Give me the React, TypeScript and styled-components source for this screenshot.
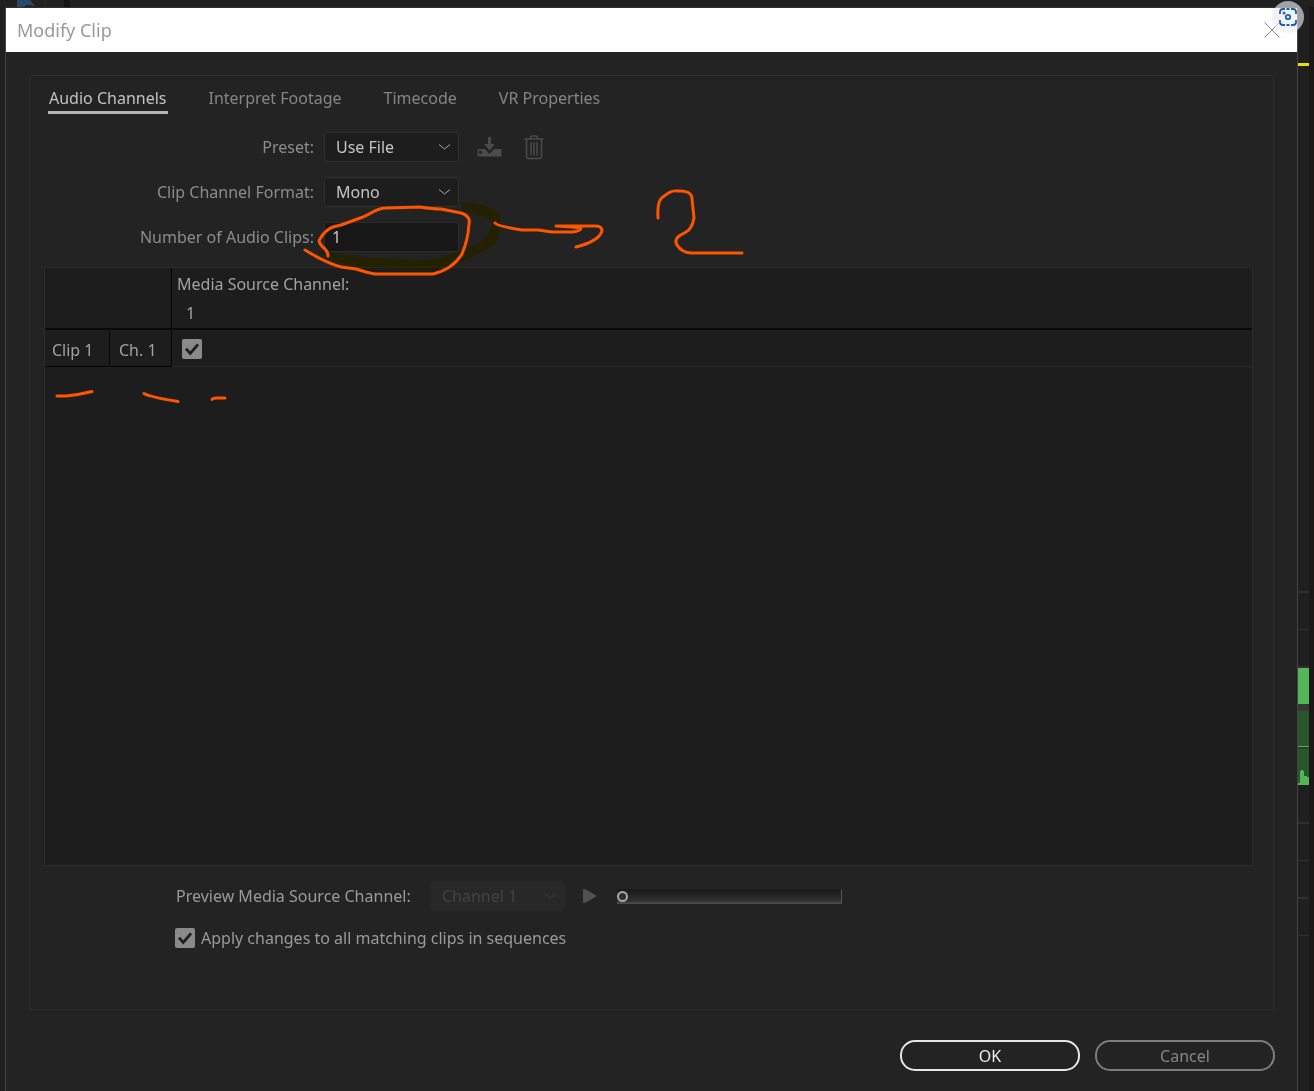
import React, { useState } from "react";
import styled, { createGlobalStyle } from "styled-components";

const GlobalStyle = createGlobalStyle`
  *, *::before, *::after { box-sizing: border-box; }
  body {
    margin: 0;
    background: #1f1f1f;
    font-family: "Noto Sans", "Open Sans", sans-serif;
    font-size: 16px;
    line-height: 24px;
    color: #9a9a9a;
  }
  button, input, select { font: inherit; }
`;

const Desktop = styled.div`
  position: relative;
  min-height: 100vh;
  display: grid;
  grid-template-columns: 5px minmax(0, 1fr) 11px 5px;
  grid-template-rows: 7px 1fr;
  background: #1f1f1f;
`;

const TopStrip = styled.div`
  grid-column: 1 / -1;
  display: flex;
  padding-left: 17px;
  background: #212121;
  overflow: hidden;
`;

const TopDivider = styled.span`
  width: 6px;
  margin-left: 18px;
  background: #151515;
`;

const Dialog = styled.section`
  grid-column: 2;
  display: flex;
  flex-direction: column;
  border: 1px solid #434343;
  border-top-color: #303030;
  border-bottom: 0;
  background: #232323;
`;

const TitleBar = styled.header`
  display: flex;
  align-items: center;
  justify-content: space-between;
  height: 44px;
  padding: 0 17px 0 11px;
  background: #ffffff;
  color: #999999;
`;

const Title = styled.h1`
  margin: 0;
  font-size: 18px;
  font-weight: 400;
`;

const IconButton = styled.button`
  display: grid;
  place-items: center;
  padding: 0;
  border: 0;
  background: none;
  color: #4b4b4b;
`;

const Panel = styled.div`
  flex: 1;
  display: flex;
  flex-direction: column;
  margin: 23px 23px 0;
  padding: 8px 20px 59px 14px;
  border: 1px solid #2e2e2e;
  border-radius: 3px;
`;

const Tabs = styled.nav`
  display: flex;
  gap: 40px;
  padding-left: 4px;
`;

const Tab = styled.button<{ $active?: boolean }>`
  padding: 0 1px;
  height: 30px;
  border: 0;
  border-bottom: 3px solid ${(p) => (p.$active ? "#b4b4b4" : "transparent")};
  background: none;
  color: ${(p) => (p.$active ? "#c2c2c2" : "#858585")};
`;

const Form = styled.div`
  display: grid;
  grid-template-columns: 270px 135px auto;
  grid-auto-rows: 30px;
  row-gap: 15px;
  column-gap: 10px;
  align-items: center;
  margin: 18px 0 15px;
`;

const FieldLabel = styled.label`
  grid-column: 1;
  text-align: right;
  color: #8c8c8c;
`;

const SelectBox = styled.div<{ $dim?: boolean }>`
  display: grid;
  grid-template-columns: 1fr 20px;
  align-items: center;
  width: 135px;
  height: 30px;
  border: 1px solid ${(p) => (p.$dim ? "#282828" : "#303030")};
  border-radius: 3px;
  background: ${(p) => (p.$dim ? "#282828" : "#1d1d1d")};
  color: ${(p) => (p.$dim ? "#424242" : "#c4c4c4")};

  svg { grid-area: 1 / 2; pointer-events: none; }
`;

const Select = styled.select`
  grid-area: 1 / 1 / 2 / 3;
  width: 100%;
  height: 28px;
  padding: 0 20px 0 11px;
  appearance: none;
  border: 0;
  background: none;
  color: inherit;
  opacity: 1;
`;

const NumberInput = styled.input`
  width: 135px;
  height: 30px;
  padding: 0 7px;
  border: 1px solid #2c2c2c;
  border-radius: 3px;
  background: #171717;
  color: #c4c4c4;
`;

const Tools = styled.div`
  display: flex;
  align-items: center;
  gap: 22px;
  padding-left: 8px;
`;

const ChannelArea = styled.div`
  flex: 1;
  min-height: 599px;
  border: 1px solid #2c2c2c;
  background: #1d1d1d;
`;

const ChannelTable = styled.table`
  width: 100%;
  border-collapse: separate;
  border-spacing: 0;
  table-layout: fixed;
`;

const HeadCell = styled.th`
  height: 62px;
  padding: 2px 5px 0;
  border-bottom: 2px solid #0a0a0a;
  font-weight: 400;
  text-align: left;
  vertical-align: top;
  line-height: 29px;
  color: #a2a2a2;

  &:first-child { border-right: 1px solid #060606; }
  span { display: block; padding-left: 9px; }
`;

const NameCell = styled.td`
  height: 37px;
  padding: 4px 7px 0;
  border-right: 1px solid #060606;
  border-bottom: 1px solid #060606;
  color: #a2a2a2;

  & + & { padding-left: 9px; }
`;

const CheckCell = styled.td`
  padding: 2px 10px 0;
  border-bottom: 1px solid #2a2a2a;
`;

const CheckFrame = styled.span`
  display: grid;
  width: 20px;
  height: 20px;

  svg { grid-area: 1 / 1; pointer-events: none; }
`;

const CheckInput = styled.input`
  grid-area: 1 / 1;
  width: 20px;
  height: 20px;
  margin: 0;
  appearance: none;
  border-radius: 2px;
  background: #8a8a8a;
  & + svg { visibility: hidden; }
  &:checked + svg { visibility: visible; }
`;

const PreviewRow = styled.div`
  display: flex;
  align-items: center;
  margin-top: 15px;
  padding-left: 132px;

  > label { width: 254px; }
`;

const PlayButton = styled(IconButton)`
  margin: 0 20px 0 18px;
`;

const Slider = styled.input`
  width: 225px;
  height: 15px;
  margin: 0;
  appearance: none;
  background: linear-gradient(#1b1b1b, #232323 40%, #343434);
  border: solid;
  border-width: 1px 1px 2px 0;
  border-color: #191919 #555555 #484848;

  &::-webkit-slider-thumb {
    appearance: none;
    width: 11px;
    height: 11px;
    margin-top: 2px;
    border: 2px solid #a8a8a8;
    border-radius: 50%;
    background: #303030;
  }
`;

const ApplyRow = styled.label`
  display: flex;
  align-items: center;
  gap: 6px;
  margin-top: 15px;
  padding-left: 131px;
`;

const Actions = styled.footer`
  display: flex;
  justify-content: flex-end;
  gap: 15px;
  padding: 30px 22px 20px;
`;

const ActionButton = styled.button<{ $primary?: boolean }>`
  width: 180px;
  height: 31px;
  padding: 0;
  border: 2px solid ${(p) => (p.$primary ? "#e6e6e6" : "#7c7c7c")};
  border-radius: 15px;
  background: none;
  color: ${(p) => (p.$primary ? "#ededed" : "#858585")};
`;

const Timeline = styled.aside`
  grid-column: 3;
  display: flex;
  flex-direction: column;
  background: #1f1f1f;
`;

const Lane = styled.div<{ $h: number; $fill?: string; $line?: string; $lineHeight?: number }>`
  flex: none;
  height: ${(p) => p.$h}px;
  background: ${(p) => p.$fill ?? "transparent"};
  border-bottom: ${(p) => p.$lineHeight ?? 0}px solid ${(p) => p.$line ?? "transparent"};
`;

const Edge = styled.div`
  grid-column: 4;
  background: #191817;
`;

const SnipBadge = styled.button`
  position: absolute;
  top: 1px;
  right: 10px;
  display: grid;
  place-items: center;
  width: 32px;
  height: 32px;
  padding: 0;
  border: 0;
  border-radius: 50%;
  background: rgba(236, 236, 236, 0.64);
`;

const Ink = styled.svg`
  position: absolute;
  top: 0;
  left: 0;
  pointer-events: none;
`;

const Highlighter = styled(Ink)`
  mix-blend-mode: multiply;
`;

const Chevron = () => (
  <svg width="14" height="8" viewBox="0 0 14 8" fill="none" stroke="currentColor" strokeWidth="1" opacity="0.8">
    <path d="M1 1.5 L6.5 6 L12 1.5" />
  </svg>
);

const CheckMark = () => (
  <svg width="20" height="20" viewBox="0 0 20 20" fill="none" stroke="#1e1e1e" strokeWidth="2.8">
    <path d="M4 9.8 L8.3 14.4 L16 5.4" />
  </svg>
);

const Check = ({ label, id }: { label?: string; id?: string }) => (
  <CheckFrame>
    <CheckInput type="checkbox" id={id} aria-label={label} defaultChecked />
    <CheckMark />
  </CheckFrame>
);

const TABS = ["Audio Channels", "Interpret Footage", "Timecode", "VR Properties"];

const lowerLanes = [
  { h: 39, line: 2 },
  { h: 37, line: 1 },
  { h: 38, line: 2 },
  { h: 37, line: 1 },
];

export default function App() {
  const [tab, setTab] = useState(TABS[0]);

  return (
    <>
      <GlobalStyle />
      <Desktop>
        <TopStrip>
          <svg width="18" height="7" viewBox="0 0 18 7">
            <path d="M0 0H13L18 6L10 5L7 7H0Z" fill="#2b4766" />
          </svg>
          <svg width="11" height="7" viewBox="0 0 11 7">
            <path d="M10.5 0V7" stroke="#2b2b2b" />
          </svg>
          <TopDivider />
        </TopStrip>

        <Dialog aria-label="Modify Clip">
          <TitleBar>
            <Title>Modify Clip</Title>
            <IconButton aria-label="Close">
              <svg width="16" height="16" viewBox="0 0 16 16" stroke="#8a8a8a" strokeWidth="1">
                <path d="M0.5 0.5 L15.5 15.5 M15.5 0.5 L0.5 15.5" />
              </svg>
            </IconButton>
          </TitleBar>

          <Panel>
            <Tabs>
              {TABS.map((name) => (
                <Tab key={name} $active={tab === name} onClick={() => setTab(name)}>
                  {name}
                </Tab>
              ))}
            </Tabs>

            <Form>
              <FieldLabel htmlFor="preset">Preset:</FieldLabel>
              <SelectBox>
                <Select id="preset">
                  <option>Use File</option>
                </Select>
                <Chevron />
              </SelectBox>
              <Tools>
                <IconButton aria-label="Save preset">
                  <svg width="25" height="20" viewBox="0 0 25 20" fill="currentColor">
                    <path d="M11 0H14V7H18L12.5 13.5L7 7H11Z" />
                    <path
                      fillRule="evenodd"
                      d="M0.5 12H8L12.5 17L17 12H24.5V19.5H0.5ZM2 13.8V16.8H5V13.8Z"
                    />
                  </svg>
                </IconButton>
                <IconButton aria-label="Delete preset">
                  <svg width="20" height="25" viewBox="0 0 20 25" fill="none" stroke="currentColor" strokeWidth="1.5">
                    <path d="M0.5 4H19.5M6.5 4V2.5Q6.5 1 8 1H12Q13.5 1 13.5 2.5V4M2.5 4V22Q2.5 23.5 4 23.5H16Q17.5 23.5 17.5 22V4M7 7V20.5M10 7V20.5M13 7V20.5" />
                  </svg>
                </IconButton>
              </Tools>

              <FieldLabel htmlFor="format">Clip Channel Format:</FieldLabel>
              <SelectBox>
                <Select id="format">
                  <option>Mono</option>
                </Select>
                <Chevron />
              </SelectBox>

              <FieldLabel htmlFor="clips">Number of Audio Clips:</FieldLabel>
              <NumberInput id="clips" type="text" inputMode="numeric" defaultValue="1" />
            </Form>

            <ChannelArea>
              <ChannelTable>
                <colgroup>
                  <col width="65" />
                  <col width="62" />
                  <col />
                </colgroup>
                <thead>
                  <tr>
                    <HeadCell colSpan={2} />
                    <HeadCell>
                      Media Source Channel:
                      <span>1</span>
                    </HeadCell>
                  </tr>
                </thead>
                <tbody>
                  <tr>
                    <NameCell>Clip 1</NameCell>
                    <NameCell>Ch. 1</NameCell>
                    <CheckCell>
                      <Check label="Clip 1, channel 1, source 1" />
                    </CheckCell>
                  </tr>
                </tbody>
              </ChannelTable>
            </ChannelArea>

            <PreviewRow>
              <label htmlFor="preview">Preview Media Source Channel:</label>
              <SelectBox $dim>
                <Select id="preview" disabled>
                  <option>Channel 1</option>
                </Select>
                <Chevron />
              </SelectBox>
              <PlayButton aria-label="Play">
                <svg width="14" height="14" viewBox="0 0 14 14">
                  <path d="M0 0H2L14 7L2 14H0Z" fill="#505050" />
                </svg>
              </PlayButton>
              <Slider type="range" min="0" max="100" defaultValue="0" aria-label="Preview position" />
            </PreviewRow>

            <ApplyRow htmlFor="apply">
              <Check id="apply" />
              Apply changes to all matching clips in sequences
            </ApplyRow>
          </Panel>

          <Actions>
            <ActionButton $primary>OK</ActionButton>
            <ActionButton>Cancel</ActionButton>
          </Actions>
        </Dialog>

        <Timeline>
          <Lane $h={56} />
          <Lane $h={3} $fill="#e8e000" />
          <Lane $h={527} $line="#2f2f2f" $lineHeight={2} />
          <Lane $h={37} $line="#2f2f2f" $lineHeight={1} />
          <Lane $h={38} $line="#2f2f2f" $lineHeight={2} />
          <Lane $h={36} $fill="#52b658" />
          <Lane $h={7} $fill="#363636" />
          <Lane $h={36} $fill="#28572b" $line="#4fb055" $lineHeight={1} />
          <Lane $h={2} $fill="#363636" />
          <Lane $h={36} $fill="#28572b">
            <svg width="11" height="36" viewBox="0 0 11 36">
              <path d="M0 34H2V22H3V21H5V22H6V27H9V28H11V36H0Z" fill="#52b658" />
            </svg>
          </Lane>
          {lowerLanes.map((lane, i) => (
            <Lane key={i} $h={lane.h} $line="#2f2f2f" $lineHeight={lane.line} />
          ))}
        </Timeline>
        <Edge />

        <SnipBadge aria-label="Capture">
          <svg width="18" height="18" viewBox="0 0 18 18" fill="none" stroke="#1763ad" strokeWidth="1.8">
            <path d="M1 6V4Q1 1 4 1H6M12 1H14Q17 1 17 4V6M17 12V14Q17 17 14 17H12M6 17H4Q1 17 1 14V12M7.5 1H10.5M7.5 17H10.5" />
            <circle cx="9" cy="9" r="2.2" />
            <circle cx="5" cy="5" r="0.6" />
          </svg>
        </SnipBadge>

        <Highlighter width="760" height="420" viewBox="0 0 760 420">
          <path
            d="M462 202L475 203L492 208L499 214L500 221L499 237L495 245L484 251L462 262L445 269L425 270L360 267L340 262L325 257L315 250L330 252L360 257L400 259L423 260L440 258L465 249L482 241L488 234L493 222L490 219L462 211Z"
            fill="#fff000"
          />
        </Highlighter>
        <Ink
          width="760"
          height="420"
          viewBox="0 0 760 420"
          fill="none"
          stroke="#ff5500"
          strokeWidth="3"
          strokeLinecap="round"
          strokeLinejoin="round"
        >
          <path d="M328 256Q328 252 325 249Q317 242 320 239Q325 230 333 227L341 225L363 217C372 213 377 208 386 208L420 207Q432 209 441 209L461 213Q471 216 469 224Q468 240 462 254Q453 269 433 274H375Q368 273 356 269L341 267Q326 263 305 250" />
          <path d="M495 223Q497 226 522 230L538 230L552 232H572Q581 231 581 228L572 227L556 226H596Q602 226 602 231Q599 241 576 247" />
          <path d="M658 218Q657 200 663 197Q671 190 677 191Q692 190 692 199L694 218Q692 229 686 232L679 236Q674 240 677 245Q682 253 692 253H742" />
          <path d="M57 396H66Q78 395 92 391.500M144 393.500Q150 397 178 401.500M212 399.500Q213 398 217 398H225" />
        </Ink>
      </Desktop>
    </>
  );
}
